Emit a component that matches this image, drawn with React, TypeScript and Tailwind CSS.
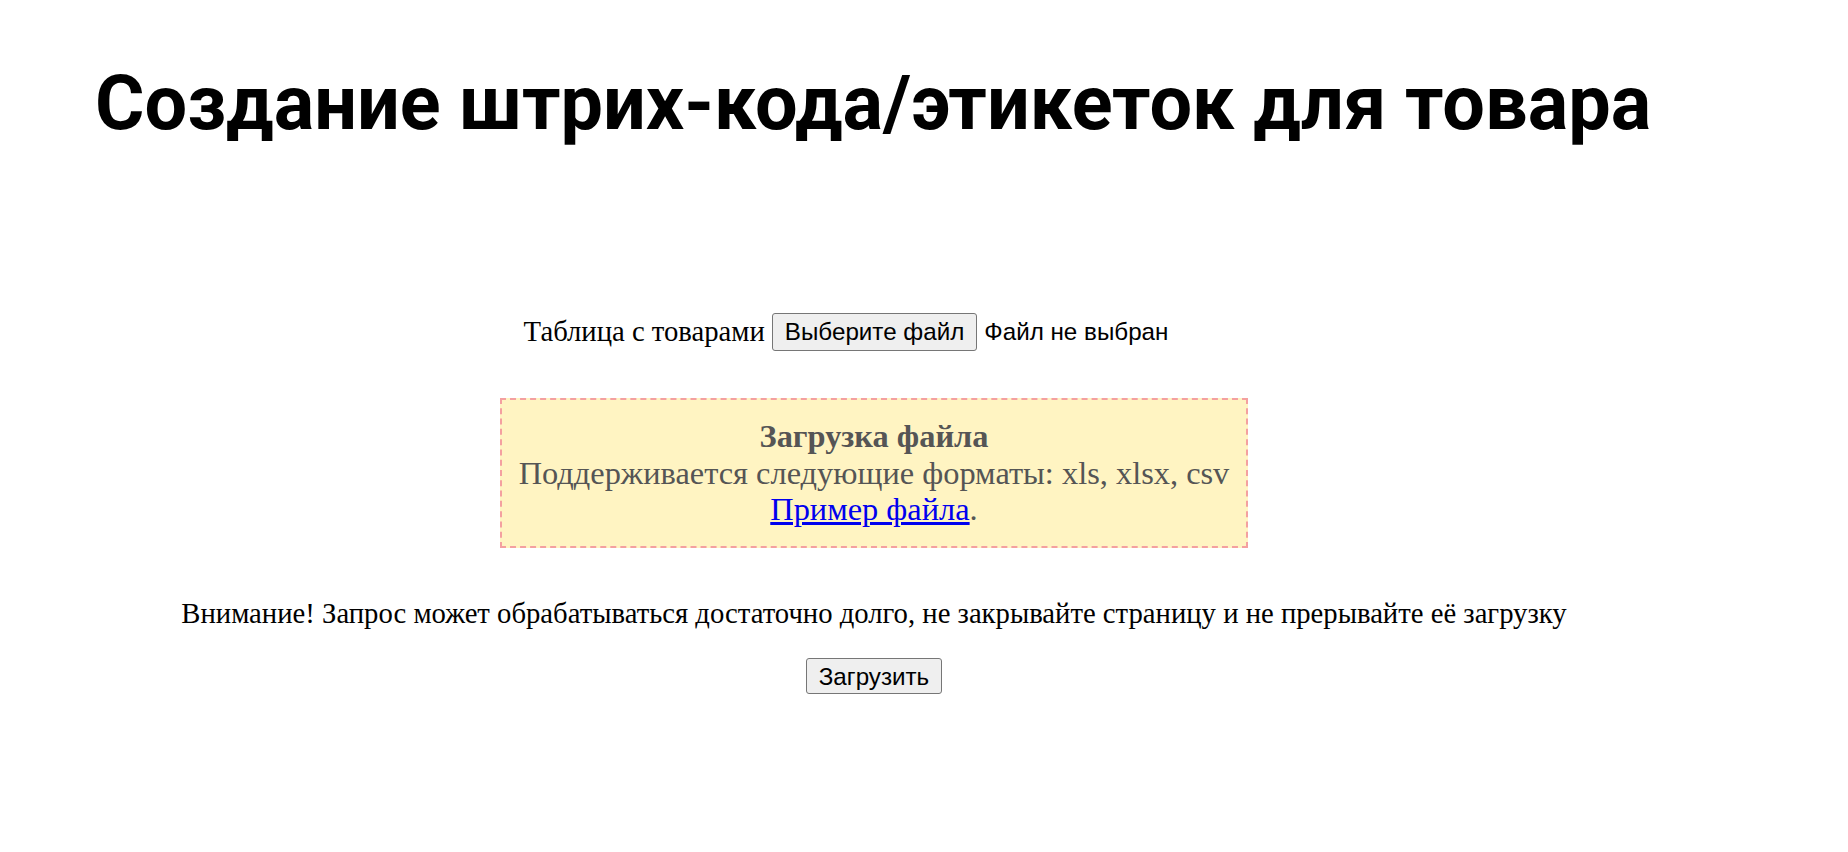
export default function App() {
    return (
        <div className="min-h-screen bg-white pt-[59px]">
            <div className="ml-[95px] w-[1558px]">
                <h1 className="whitespace-nowrap text-[75.6px] font-bold leading-[89px] text-black font-['Roboto',sans-serif]">
                    Создание штрих-кода/этикеток для товара
                </h1>

                {/* File select row */}
                <div className="mt-[165px] flex h-[38px] items-center justify-center pr-[56px] font-['Liberation_Serif',serif] text-[28.7px] text-black">
                    <span className="mr-[7px]">Таблица с товарами</span>
                    <button className="h-[38px] rounded-[3px] border border-[#767676] bg-[#efefef] px-[12px] font-['Liberation_Sans',sans-serif] text-[24.2px] text-black">
                        Выберите файл
                    </button>
                    <span className="ml-[7px] font-['Liberation_Sans',sans-serif] text-[24.2px]">Файл не выбран</span>
                </div>

                {/* Upload hint */}
                <div className="mx-auto mt-[47px] w-[748px] border-2 border-dashed border-[#f4a0a0] bg-[#fff4c2] py-[18px] text-center font-['Liberation_Serif',serif] text-[32.4px] leading-[36.5px] text-[#555555]">
                    <div className="font-bold">Загрузка файла</div>
                    <div>Поддерживается следующие форматы: xls, xlsx, csv</div>
                    <div>
                        <a href="#" className="text-[#0000ee] underline">Пример файла</a>.
                    </div>
                </div>

                <p className="mt-[49px] text-center font-['Liberation_Serif',serif] text-[28.7px] leading-[33px] text-black">
                    Внимание! Запрос может обрабатываться достаточно долго, не закрывайте страницу и не прерывайте её загрузку
                </p>

                <div className="mt-[28px] flex justify-center">
                    <button className="h-[36px] rounded-[3px] border border-[#767676] bg-[#efefef] px-[12px] font-['Liberation_Sans',sans-serif] text-[24.2px] text-black">
                        Загрузить
                    </button>
                </div>
            </div>
        </div>
    );
}
